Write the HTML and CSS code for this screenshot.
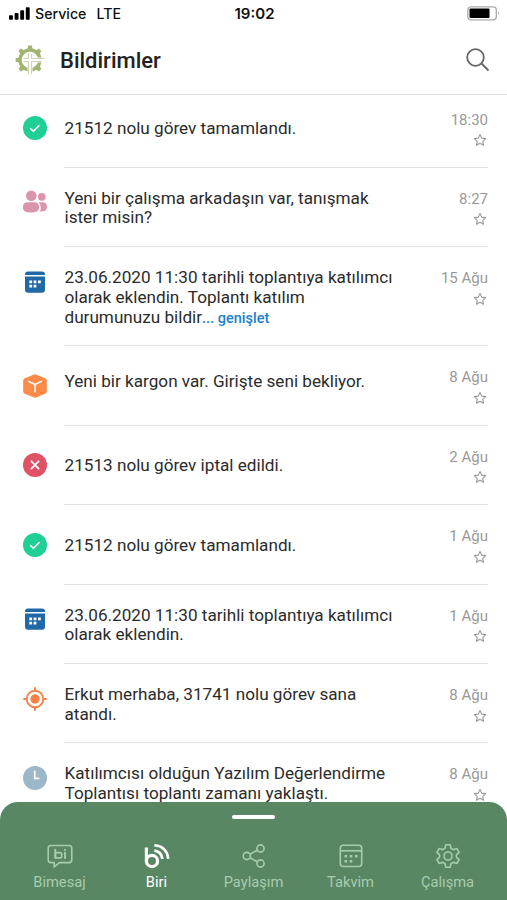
FILE: index.html
```html
<!DOCTYPE html>
<html lang="tr">
<head>
	<meta charset="utf-8">
	<title>Bildirimler</title>
	<meta name="viewport" content="width=device-width, initial-scale=1">
	<link rel="stylesheet" href="styles.css">
</head>
<body>
	<svg class="sprite">
		<symbol id="check" viewBox="0 0 24 24">
			<circle cx="12" cy="12" r="12" fill="#1fcf96"/>
			<path d="M7.2 12.200l3.200 3.200 6-6.100" fill="none" stroke="#fff" stroke-width="1.600"/>
		</symbol>
		<symbol id="calendar" viewBox="0 0 24 24">
			<path d="M5 1.500h14q3 0 3 3v.6H2v-.6q0-3 3-3zM2 6.500h20v13q0 3.200-3 3.200H5q-3 0-3-3.200z" fill="#2068a8"/>
			<path d="M6.300 10.500h2.800v2.800H6.300zM10.600 10.500h2.800v2.800h-2.800zM15 10.500h2.800v2.800H15zM6.300 14.700h2.800v2.800H6.300zM10.600 14.700h2.800v2.800h-2.800z" fill="#fff"/>
		</symbol>
		<symbol id="star" viewBox="0 0 24 24">
			<path d="M12 2.500l2.900 6.300 6.900.8-5.100 4.700 1.400 6.800-6.100-3.400-6.100 3.400 1.400-6.800-5.100-4.700 6.900-.8z" fill="none" stroke="#999" stroke-width="1.900" stroke-linejoin="round"/>
		</symbol>
	</svg>

	<div class="screen">
		<div class="status">
			<div class="carrier">
				<svg class="signal" viewBox="0 0 21 13"><path d="M0 9q0-.8.8-.8h2.300q.8 0 .8.800v3q0 .8-.8.800H.8Q0 12.800 0 12zM5.600 6.700q0-.8.800-.8h2.300q.8 0 .8.800V12q0 .8-.8.800H6.400q-.8 0-.8-.8zM11.200 4q0-.8.800-.8h2.300q.8 0 .8.800v8q0 .8-.8.800H12q-.8 0-.8-.8zM16.800 1q0-.8.800-.8h2.300q.8 0 .8.800v11q0 .8-.8.800h-2.300q-.8 0-.8-.8z"/></svg>
				<span>Service</span>
				<span class="network">LTE</span>
			</div>
			<div class="clock">19:02</div>
			<svg class="battery" viewBox="0 0 33 15"><rect x=".8" y=".8" width="28.500" height="13" rx="3" fill="#fff" stroke="#aaa" stroke-width="1.300"/><rect x="2.500" y="2.500" width="20" height="9.600" rx="1"/><path d="M31 5q1.800 2.300 0 4.600z" fill="#999"/></svg>
		</div>

		<header class="header">
			<svg class="logo" viewBox="0 0 30 30">
				<g fill="#a0b572">
					<path id="tooth" d="M12.400 4.500l.8-3.900h3.600l.8 3.900z"/>
					<use href="#tooth" transform="rotate(-45 15 15)"/>
					<use href="#tooth" transform="rotate(45 15 15)"/>
					<use href="#tooth" transform="rotate(-90 15 15)"/>
					<use href="#tooth" transform="rotate(-135 15 15)"/>
					<use href="#tooth" transform="rotate(135 15 15)"/>
				</g>
				<circle cx="15" cy="15" r="10" fill="none" stroke="#a0b572" stroke-width="3.400"/>
				<path d="M15 8.500V30M8.500 15H30" stroke="#fff" stroke-width="5"/>
				<path d="M8.500 13.500h5V8.500M16.500 8.500v5h13M8.500 16.500h5v12.800M16.500 29V16.500H27" fill="none" stroke="#c3d0a6" stroke-width=".9"/>
			</svg>
			<h1>Bildirimler</h1>
			<svg class="search" viewBox="0 0 24 24"><circle cx="9.500" cy="9.500" r="8.300"/><path d="M15.500 15.500l7 7"/></svg>
		</header>

		<main class="list">
			<div class="row single">
				<svg class="icon"><use href="#check"/></svg>
				<p>21512 nolu görev tamamlandı.</p>
				<div class="meta">18:30<svg class="star"><use href="#star"/></svg></div>
			</div>
			<div class="row">
				<svg class="icon" viewBox="0 0 24 24" fill="#dc94aa"><circle cx="8.300" cy="5.700" r="5.300"/><circle cx="18.800" cy="6.900" r="3.800"/><path d="M4.800 12.200h6.700q4.500 0 4.500 4.500v1.500q0 4.200-8 4.200t-8-4.200v-1.500q0-4.500 4.800-4.500zM15.500 12.200h4q4.300 0 4.300 4.300V18q0 3.500-7 3.500 1-1.300 1-3V17q0-2.800-2.300-4.800z"/></svg>
				<p>Yeni bir çalışma arkadaşın var, tanışmak<br>ister misin?</p>
				<div class="meta">8:27<svg class="star"><use href="#star"/></svg></div>
			</div>
			<div class="row tall">
				<svg class="icon"><use href="#calendar"/></svg>
				<p>23.06.2020 11:30 tarihli toplantıya katılımcı<br>olarak eklendin. Toplantı katılım<br>durumunuzu bildir<a class="more">... genişlet</a></p>
				<div class="meta">15 Ağu<svg class="star"><use href="#star"/></svg></div>
			</div>
			<div class="row single raised">
				<svg class="icon" viewBox="0 0 24 24"><path d="M10.500.7q1.500-.7 3 0l8.700 3.500q1.600.7 1.600 2.300v11q0 1.600-1.600 2.300l-8.700 3.500q-1.500.7-3 0l-8.700-3.500Q.2 19.100.2 17.500v-11q0-1.600 1.600-2.300z" fill="#fe8a47"/><path d="M5.300 7.300l6.700 3.100 6.700-3.100M12 10.400v7.800" fill="none" stroke="#fff" stroke-width="1.500"/></svg>
				<p>Yeni bir kargon var. Girişte seni bekliyor.</p>
				<div class="meta">8 Ağu<svg class="star"><use href="#star"/></svg></div>
			</div>
			<div class="row single">
				<svg class="icon" viewBox="0 0 24 24"><circle cx="12" cy="12" r="12" fill="#df5267"/><path d="M7.900 7.900l8.200 8.200M16.100 7.900l-8.200 8.200" stroke="#fff" stroke-width="1.700"/></svg>
				<p>21513 nolu görev iptal edildi.</p>
				<div class="meta">2 Ağu<svg class="star"><use href="#star"/></svg></div>
			</div>
			<div class="row single">
				<svg class="icon"><use href="#check"/></svg>
				<p>21512 nolu görev tamamlandı.</p>
				<div class="meta">1 Ağu<svg class="star"><use href="#star"/></svg></div>
			</div>
			<div class="row">
				<svg class="icon"><use href="#calendar"/></svg>
				<p>23.06.2020 11:30 tarihli toplantıya katılımcı<br>olarak eklendin.</p>
				<div class="meta">1 Ağu<svg class="star"><use href="#star"/></svg></div>
			</div>
			<div class="row">
				<svg class="icon" viewBox="0 0 24 24" fill="none" stroke="#fa8248"><circle cx="12" cy="12" r="8.300" stroke-width="1.900"/><path d="M12 .3v4M12 19.700v4M.3 12h4M19.700 12h4" stroke-width="2"/><circle cx="12" cy="12" r="4.700" fill="#fa8248" stroke="none"/></svg>
				<p>Erkut merhaba, 31741 nolu görev sana<br>atandı.</p>
				<div class="meta">8 Ağu<svg class="star"><use href="#star"/></svg></div>
			</div>
			<div class="row">
				<svg class="icon" viewBox="0 0 24 24"><circle cx="12" cy="12" r="12" fill="#9cb7c8"/><path d="M11.700 4.500v7.800h4.600" fill="none" stroke="#fff" stroke-width="1.700"/></svg>
				<p>Katılımcısı olduğun Yazılım Değerlendirme<br>Toplantısı toplantı zamanı yaklaştı.</p>
				<div class="meta">8 Ağu<svg class="star"><use href="#star"/></svg></div>
			</div>
		</main>

		<nav class="tabs">
			<div class="handle"></div>
			<div class="items">
				<a class="tab">
					<svg viewBox="0 0 26 26"><path d="M4 2.500h18q2.800 0 2.800 2.800v11.500q0 2.800-2.800 2.800h-9.500l-5.300 4.200v-4.200H4q-2.800 0-2.800-2.800V5.300Q1.200 2.500 4 2.500z"/><path d="M8.300 5.800v9.900M18 9v6.700M18 5.900v1.800" stroke-width="1.900"/><rect x="8.300" y="9.600" width="6.400" height="5.300" rx="1.500" stroke-width="1.700"/></svg>
					Bimesaj
				</a>
				<a class="tab active">
					<svg viewBox="0 0 26 26"><path d="M2.400 4.500v14" stroke-width="3.200"/><circle cx="8" cy="18" r="5.600" stroke-width="3.200"/><path d="M10.300 7.600q7.200.9 8 8.200M10.300 2.300q12.500 1 14 13.500" stroke-width="2.600"/></svg>
					Biri
				</a>
				<a class="tab">
					<svg viewBox="0 0 26 26"><circle cx="5.800" cy="13" r="3.600"/><circle cx="19.500" cy="5.500" r="3.600"/><circle cx="19.500" cy="20.500" r="3.600"/><path d="M9 11.200l7.300-4M9 14.800l7.300 4"/></svg>
					Paylaşım
				</a>
				<a class="tab">
					<svg viewBox="0 0 26 26"><rect x="2.300" y="2.300" width="21.400" height="21.200" rx="3"/><path d="M2.500 7.800h21"/><path d="M6.500 13.300h2.600M11.700 13.300h2.600M16.900 13.300h2.600M6.500 18.300h2.600M11.700 18.300h2.600" stroke-width="2.600"/></svg>
					Takvim
				</a>
				<a class="tab">
					<svg viewBox="0 0 26 26"><path d="M10.800 1.800h4.400l.8 3.500 2.400 1.400 3.500-1.100 2.200 3.800-2.700 2.400v2.400l2.700 2.400-2.200 3.800-3.500-1.100-2.400 1.400-.8 3.500h-4.400l-.8-3.500-2.400-1.400-3.500 1.100-2.200-3.800 2.700-2.400v-2.400L1.900 9.400l2.200-3.800 3.500 1.100L10 5.300z" stroke-linejoin="round"/><circle cx="13" cy="13" r="4"/></svg>
					Çalışma
				</a>
			</div>
		</nav>
	</div>
</body>
</html>
```
FILE: styles.css
```css
* {
	box-sizing: border-box;
}

body {
	background: #fff;
	color: #2b2b2b;
	font-family: Roboto, "Liberation Sans", sans-serif;
	margin: 0;
}

.sprite {
	display: none;
}

.screen {
	display: flex;
	flex-direction: column;
	height: 900px;
	overflow: hidden;
	width: 507px;
}

/* Status bar */
.status {
	align-items: center;
	color: #111;
	display: grid;
	flex: none;
	font-family: Inter, "Liberation Sans", sans-serif;
	font-size: 14.2px;
	font-weight: 500;
	grid-template-columns: 1fr auto 1fr;
	height: 27px;
	padding: 0 7px 0 9px;
}

.carrier {
	align-items: center;
	display: flex;
	gap: 5px;
}

.signal {
	height: 13px;
	width: 21px;
}

.network {
	margin-left: 5px;
}

.clock {
	font-size: 15px;
	font-weight: 600;
}

.battery {
	height: 15px;
	justify-self: end;
	width: 33px;
}

/* Title bar */
.header {
	align-items: center;
	border-bottom: 1px solid #dedede;
	display: flex;
	flex: none;
	height: 68px;
	padding: 0 17px 0 15px;
}

.logo {
	height: 30px;
	margin-top: -2px;
	width: 30px;
}

.header h1 {
	color: #222;
	flex: 1;
	font-size: 22px;
	font-weight: 500;
	margin: 0 0 0 15px;
}

.search {
	fill: none;
	height: 24px;
	margin-top: -2px;
	stroke: #666;
	stroke-width: 1.8;
	width: 24px;
}

/* Notifications */
.list {
	flex: 1;
	margin-top: -6.500px;
	min-height: 0;
	overflow: hidden;
}

.row {
	column-gap: 17px;
	display: grid;
	grid-template-columns: 24px 1fr auto;
	height: 79.4px;
	padding: 0 19px 0 23px;
}

.tall {
	height: 99.2px;
}

.icon {
	height: 24px;
	margin-top: 22.500px;
	width: 24px;
}

.single .icon {
	margin-top: 27.500px;
}

.row p,
.meta {
	border-bottom: 1px solid #e2e2e2;
}

.row p {
	font-size: 17.15px;
	line-height: 19.700px;
	margin: 0 -17px 0 0;
	padding: 20.900px 0 0 .5px;
	white-space: nowrap;
}

.single p {
	padding-top: 30.300px;
}

.raised p {
	padding-top: 25.600px;
}

.more {
	color: #1b7fd0;
	font-size: 14.500px;
	font-weight: 500;
}

.meta {
	align-items: flex-end;
	color: #999;
	display: flex;
	flex-direction: column;
	font-size: 15px;
	gap: 4.500px;
	line-height: 18px;
	padding-top: 22px;
}

.star {
	height: 14px;
	margin-right: 1px;
	width: 14px;
}

/* Bottom tabs */
.tabs {
	background: #598663;
	border-radius: 18px 18px 0 0;
	display: flex;
	flex: none;
	flex-direction: column;
	height: 98px;
	padding: 13px 11px 0;
}

.handle {
	align-self: center;
	background: #fff;
	border-radius: 2px;
	height: 4px;
	width: 43px;
}

.items {
	display: grid;
	grid-template-columns: repeat(5, 1fr);
	padding-top: 24px;
}

.tab {
	align-items: center;
	color: #a8ccae;
	display: flex;
	flex-direction: column;
	font-size: 14.700px;
	gap: 4px;
	line-height: 18px;
}

.tab svg {
	fill: none;
	height: 26px;
	stroke: currentColor;
	stroke-width: 1.6;
	width: 26px;
}

.active {
	color: #fff;
}
```
